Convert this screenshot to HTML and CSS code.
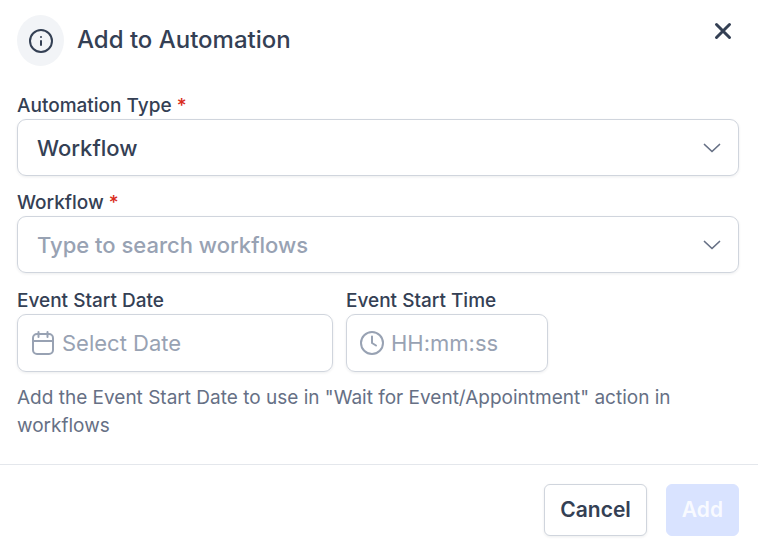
FILE: index.html
```html
<!DOCTYPE html>
<html lang="en">
<head>
  <meta charset="UTF-8">
  <meta name="viewport" content="width=device-width, initial-scale=1">
  <title>Add to Automation</title>
  <link rel="stylesheet" href="styles.css">
</head>
<body>
  <form class="modal">
    <header class="modal-header">
      <span class="header-icon">
        <svg width="26" height="26" viewBox="0 0 26 26" fill="none" stroke="currentColor" stroke-width="2" stroke-linecap="round">
          <circle cx="13" cy="13" r="11"/>
          <path d="M13 13v4M13 9v.1"/>
        </svg>
      </span>
      <h1>Add to Automation</h1>
      <button type="button" class="close" aria-label="Close">
        <svg width="18" height="18" viewBox="0 0 18 18" fill="none" stroke="currentColor" stroke-width="3" stroke-linecap="round">
          <path d="M2.500 2.500l13 13M15.500 2.500l-13 13"/>
        </svg>
      </button>
    </header>

    <div class="modal-body">
      <div class="field">
        <label for="type">Automation Type <span class="required">*</span></label>
        <div class="control">
          <select id="type" required>
            <option>Workflow</option>
          </select>
          <svg class="chevron" width="18" height="10" viewBox="0 0 18 10" fill="none" stroke="currentColor" stroke-width="1.700" stroke-linecap="round" stroke-linejoin="round">
            <path d="M1.500 1.500L9 8.500l7.500-7"/>
          </svg>
        </div>
      </div>

      <div class="field">
        <label for="workflow">Workflow <span class="required">*</span></label>
        <div class="control">
          <input type="text" id="workflow" class="search" placeholder="Type to search workflows" required>
          <svg class="chevron" width="18" height="10" viewBox="0 0 18 10" fill="none" stroke="currentColor" stroke-width="1.700" stroke-linecap="round" stroke-linejoin="round">
            <path d="M1.500 1.500L9 8.500l7.500-7"/>
          </svg>
        </div>
      </div>

      <div class="row">
        <div class="field date">
          <label for="date">Event Start Date</label>
          <div class="control with-icon">
            <svg width="24" height="26" viewBox="0 0 24 26" fill="none" stroke="currentColor" stroke-width="2" stroke-linecap="round">
              <rect x="2" y="4" width="20" height="20" rx="4"/>
              <path d="M2 11h20M7.500 2v5M16.500 2v5"/>
            </svg>
            <input type="text" id="date" placeholder="Select Date">
          </div>
        </div>
        <div class="field time">
          <label for="time">Event Start Time</label>
          <div class="control with-icon">
            <svg width="24" height="26" viewBox="0 0 24 26" fill="none" stroke="currentColor" stroke-width="2" stroke-linecap="round" stroke-linejoin="round">
              <circle cx="12" cy="13" r="11"/>
              <path d="M12 6.500V13l4 2.500"/>
            </svg>
            <input type="text" id="time" placeholder="HH:mm:ss">
          </div>
        </div>
      </div>

      <p class="hint">Add the Event Start Date to use in "Wait for Event/Appointment" action in workflows</p>
    </div>

    <footer class="modal-footer">
      <button type="button" class="btn">Cancel</button>
      <button type="submit" class="btn btn-primary" disabled>Add</button>
    </footer>
  </form>
</body>
</html>
```

FILE: styles.css
```css
* {
  margin: 0;
  padding: 0;
  box-sizing: border-box;
}

body {
  font-family: Inter, sans-serif;
  font-size: 19px;
  line-height: 28px;
  color: #344054;
  background: #fff;
}

button,
input,
select {
  font: inherit;
  color: inherit;
}

.modal-header {
  display: flex;
  align-items: center;
  padding: 15px 19px 0 17px;
}

.header-icon {
  display: flex;
  align-items: center;
  justify-content: center;
  width: 47px;
  height: 51px;
  border-radius: 50%;
  background: #f2f4f7;
}

h1 {
  flex: 1;
  margin-left: 13px;
  padding-bottom: 2px;
  font-size: 24px;
  font-weight: 500;
}

.close {
  display: flex;
  align-self: flex-start;
  padding: 7px;
  border: none;
  background: none;
  cursor: pointer;
}

.modal-body {
  padding: 25px 19px 24px 17px;
}

.field {
  min-width: 0;
  margin-bottom: 12px;
}

label {
  display: block;
  padding-top: 2px;
  font-weight: 500;
  line-height: 26px;
}

.required {
  color: #d92d20;
}

.control {
  display: flex;
  align-items: center;
  height: 57px;
  padding: 0 17px 0 19px;
  border: 1px solid #d0d5dd;
  border-radius: 9px;
  box-shadow: 0 1px 3px rgba(16, 24, 40, 0.08);
}

.control input,
.control select {
  flex: 1;
  min-width: 0;
  font-size: 22px;
  border: none;
  outline: none;
  background: none;
  appearance: none;
}

.control select,
.control .search {
  font-weight: 500;
}

input::placeholder {
  color: #98a2b3;
  opacity: 1;
}

.chevron {
  color: #667085;
}

.control.with-icon {
  gap: 7px;
  height: 58px;
  padding: 0 13px;
  color: #98a2b3;
}

.with-icon svg {
  flex-shrink: 0;
}

.row {
  display: flex;
  gap: 13px;
  margin-top: 13px;
}

.date {
  flex: 0 1 316px;
}

.time {
  flex: 0 1 202px;
}

.hint {
  color: #667085;
}

.modal-footer {
  display: flex;
  justify-content: flex-end;
  gap: 19px;
  padding: 19px 19px 6px;
  border-top: 1px solid #e4e7ec;
}

.btn {
  height: 52px;
  padding: 0 15px;
  font-size: 21px;
  font-weight: 600;
  border: 1px solid #d0d5dd;
  border-radius: 6px;
  background: #fff;
  box-shadow: 0 1px 3px rgba(16, 24, 40, 0.08);
  cursor: pointer;
}

.btn-primary {
  color: #f8faff;
  border-color: #d9e3ff;
  background: #d9e3ff;
  box-shadow: none;
}
```
